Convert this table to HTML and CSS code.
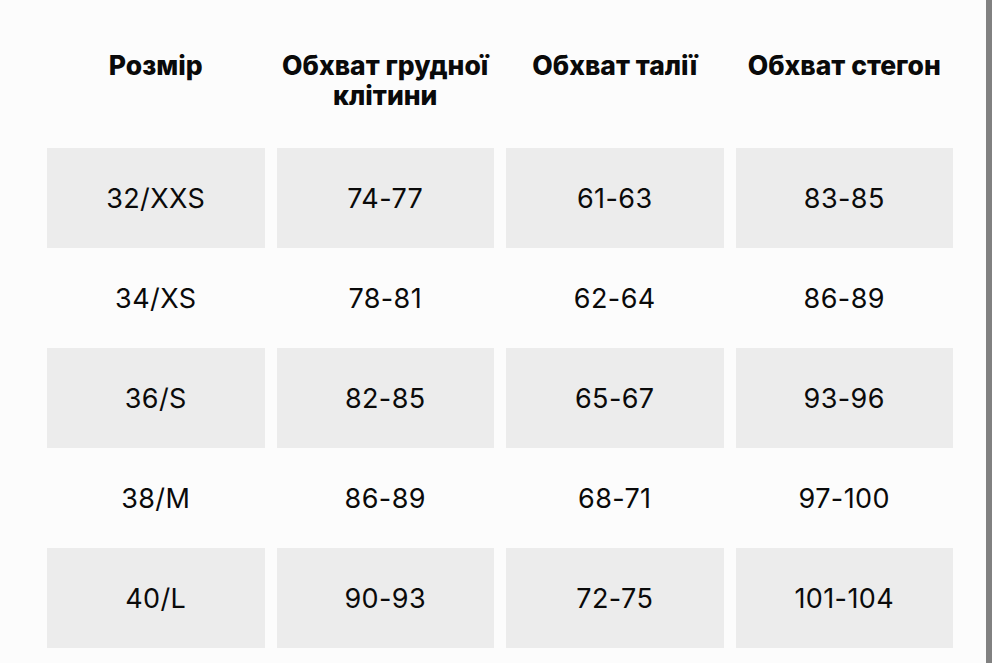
FILE: index.html
```html
<!DOCTYPE html>
<html lang="uk">
<head>
<meta charset="utf-8">
<link rel="stylesheet" href="styles.css">
</head>
<body>
<div class="page">
  <main class="content">
    <div class="table">
      <div class="head">Розмір</div>
      <div class="head">Обхват грудної клітини</div>
      <div class="head">Обхват талії</div>
      <div class="head">Обхват стегон</div>

      <div class="cell shade">32/XXS</div>
      <div class="cell shade">74-77</div>
      <div class="cell shade">61-63</div>
      <div class="cell shade">83-85</div>

      <div class="cell">34/XS</div>
      <div class="cell">78-81</div>
      <div class="cell">62-64</div>
      <div class="cell">86-89</div>

      <div class="cell shade">36/S</div>
      <div class="cell shade">82-85</div>
      <div class="cell shade">65-67</div>
      <div class="cell shade">93-96</div>

      <div class="cell">38/M</div>
      <div class="cell">86-89</div>
      <div class="cell">68-71</div>
      <div class="cell">97-100</div>

      <div class="cell shade">40/L</div>
      <div class="cell shade">90-93</div>
      <div class="cell shade">72-75</div>
      <div class="cell shade">101-104</div>
    </div>
  </main>
  <div class="scrollbar"></div>
  <div class="edge"></div>
</div>
</body>
</html>
```

FILE: styles.css
```css
html, body {
  margin: 0;
  padding: 0;
  background: #ffffff;
  overflow: hidden;
}

.page {
  display: flex;
  width: 1000px;
  height: 663px;
  overflow: hidden;
}

.content {
  width: 986px;
  flex: none;
  background: #fcfcfc;
  padding-left: 47px;
  box-sizing: border-box;
}

.scrollbar {
  width: 6px;
  flex: none;
  background: #818181;
}

.edge {
  flex: 1;
  background: #ffffff;
}

.table {
  display: grid;
  grid-template-columns: repeat(4, 217.5px);
  grid-template-rows: 148px repeat(5, 100px);
  column-gap: 12px;
  font-family: "Inter", "Noto Sans", sans-serif;
  color: #0a0a0a;
}

.head {
  padding: 50px 0 0;
  text-align: center;
  font-weight: 800;
  font-size: 26.5px;
  line-height: 30px;
}

.cell {
  display: flex;
  align-items: center;
  justify-content: center;
  font-size: 27px;
  font-weight: 400;
  letter-spacing: 0.4px;
}

.shade {
  background: #ececec;
}
```
